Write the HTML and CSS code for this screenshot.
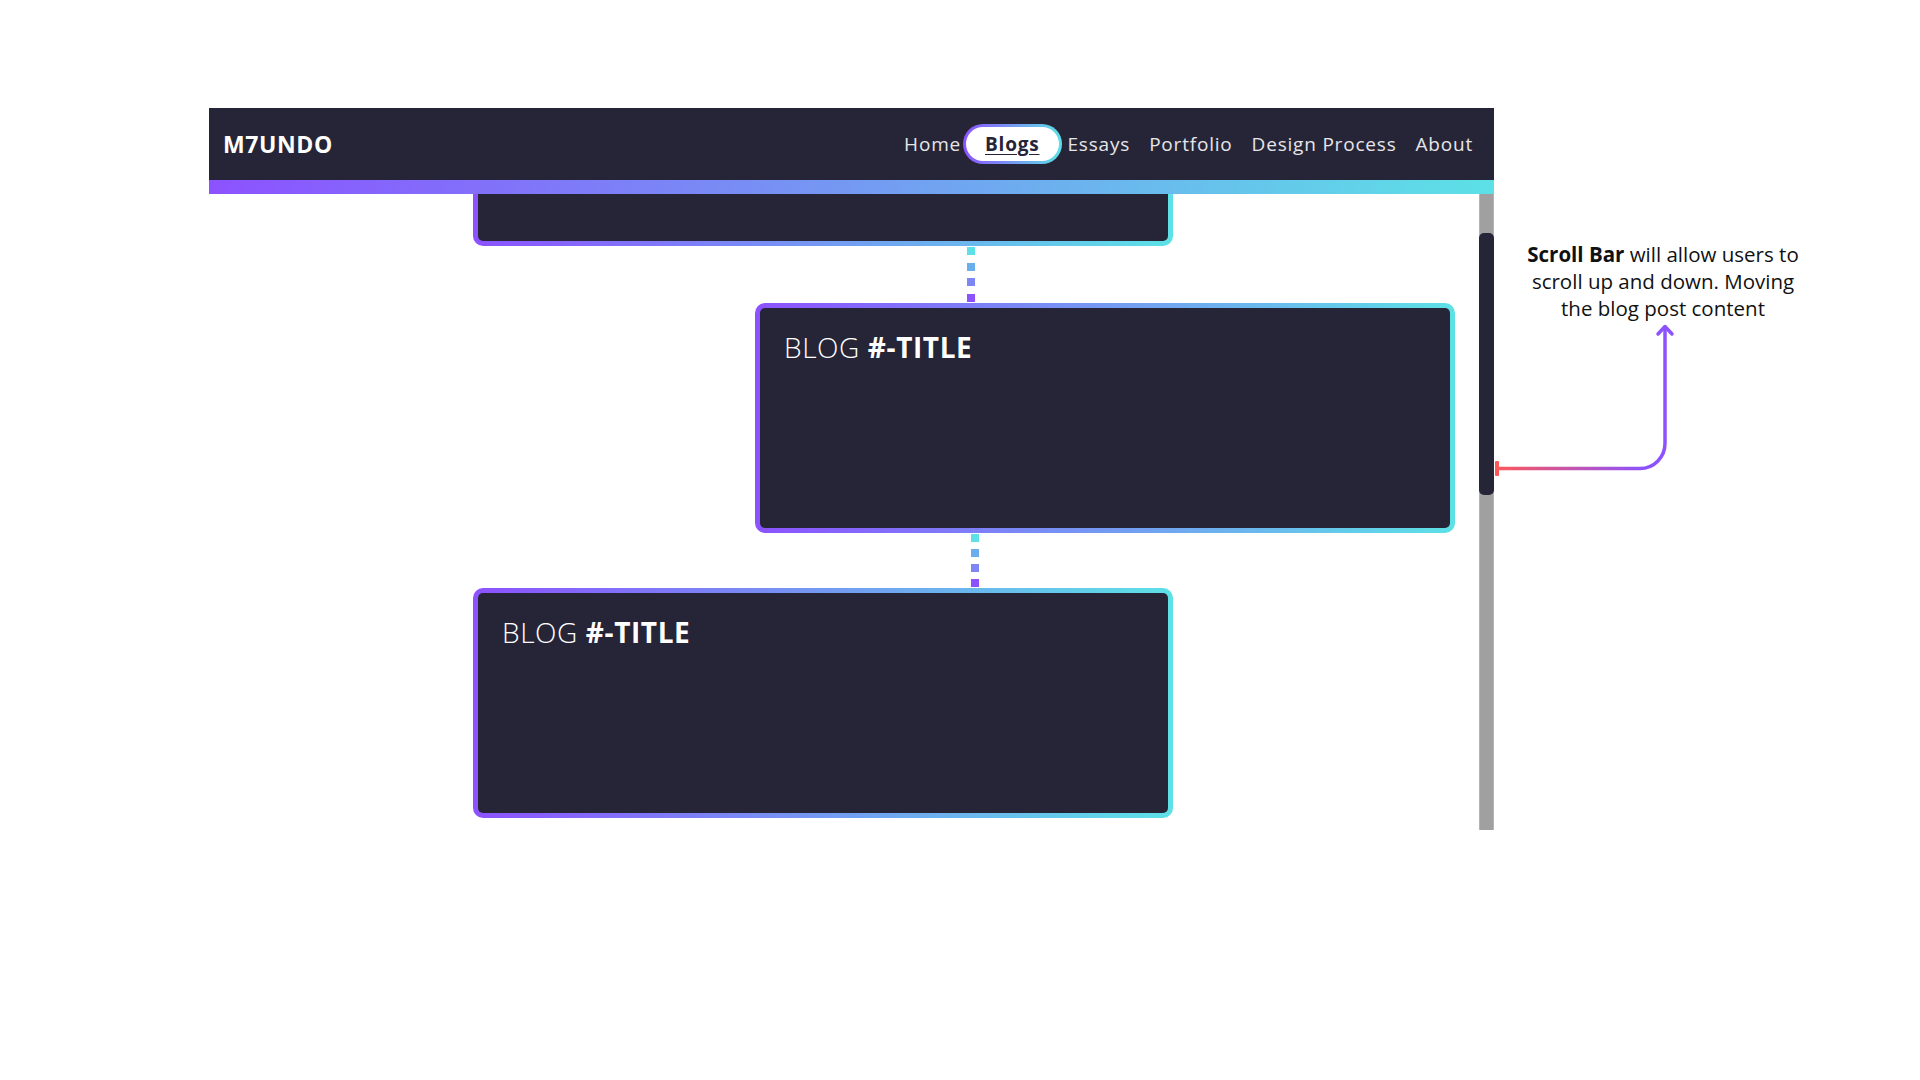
FILE: index.html
```html
<!DOCTYPE html>
<html lang="en">
	<head>
		<meta charset="UTF-8" />
		<title>M7UNDO - Blogs</title>
		<link rel="stylesheet" href="styles.css">
	</head>
	<body>
		<div class="frame">
			<header class="topbar">
				<div class="logo">M7UNDO</div>
				<nav class="nav">
					<a href="#">Home</a>
					<a href="#" class="current">Blogs</a>
					<a href="#">Essays</a>
					<a href="#">Portfolio</a>
					<a href="#">Design Process</a>
					<a href="#">About</a>
				</nav>
			</header>
			<div class="stripe"></div>
			<div class="view">
				<main class="timeline">
					<article class="card card-left card-first"></article>
					<div class="link link-a"><i></i><i></i><i></i><i></i></div>
					<article class="card card-right"><h2><span class="thin">BLOG</span> #-TITLE</h2></article>
					<div class="link link-b"><i></i><i></i><i></i><i></i></div>
					<article class="card card-left"><h2><span class="thin">BLOG</span> #-TITLE</h2></article>
				</main>
				<div class="track"><div class="thumb"></div></div>
			</div>
		</div>
		<aside class="note">
			<p><b>Scroll Bar</b> will allow users to scroll up and down. Moving the blog post content</p>
			<svg class="pointer" width="190" height="162" viewBox="0 0 190 162">
				<defs>
					<linearGradient id="arrowfade" gradientUnits="userSpaceOnUse" x1="0" y1="0" x2="150" y2="0">
						<stop offset="0" stop-color="#ff5757" />
						<stop offset="1" stop-color="#8c52ff" />
					</linearGradient>
				</defs>
				<rect x="1" y="139" width="4" height="15" rx="1" fill="#ff5757" />
				<path d="M3 146.5 H146 A25 25 0 0 0 171 121.5 V5" fill="none" stroke="url(#arrowfade)" stroke-width="3.5" stroke-linecap="round" />
				<path d="M164 12 L171 4.5 L178 12" fill="none" stroke="#8c52ff" stroke-width="3.5" stroke-linecap="round" stroke-linejoin="round" />
			</svg>
		</aside>
	</body>
</html>
```

FILE: styles.css
```css
body{
	margin:0;
	padding:108px 0 0 209px;
	background:#fff;
	display:flex;
	align-items:flex-start;
	font-family:"Open Sans",sans-serif;
}
.frame{
	width:1285px;
	flex:none;
}
/* top bar */
.topbar{
	height:72px;
	background:#262537;
	display:flex;
	align-items:center;
	justify-content:space-between;
	padding:0 21px 0 14px;
	box-sizing:border-box;
}
.logo{
	color:#fff;
	font-weight:700;
	font-size:23px;
	letter-spacing:0.6px;
}
.nav{
	display:flex;
	align-items:center;
	gap:19px;
}
.nav a{
	color:#e6e6ea;
	text-decoration:none;
	font-size:19px;
	letter-spacing:0.8px;
}
.nav a.current{
	margin:0 -13px 0 -17px;
	padding:0 19px;
	height:34px;
	line-height:34px;
	border:3px solid transparent;
	border-radius:20px;
	background:linear-gradient(#fff,#fff) padding-box,linear-gradient(90deg,#8c52ff,#5ce1e6) border-box;
	color:#262537;
	font-weight:700;
	text-decoration:underline;
	text-underline-offset:3px;
}
.stripe{
	height:14px;
	background:linear-gradient(90deg,#8c52ff,#5ce1e6);
	position:relative;
	z-index:1;
}
/* scroll area */
.view{
	height:636px;
	display:flex;
	overflow:hidden;
}
.timeline{
	flex:1;
	display:flex;
	flex-direction:column;
	align-items:flex-start;
}
.card{
	width:700px;
	height:230px;
	box-sizing:border-box;
	border:5px solid transparent;
	border-radius:10px;
	background:linear-gradient(#262537,#262537) padding-box,linear-gradient(90deg,#8c52ff,#5ce1e6) border-box;
	padding:21px 24px;
	flex:none;
}
.card-left{
	margin-left:264px;
}
.card-right{
	margin-left:546px;
}
.card-first{
	margin-top:-178px;
}
.card h2{
	margin:0;
	color:#fff;
	font-size:28px;
	font-weight:700;
	line-height:36px;
	letter-spacing:0.6px;
}
.card .thin{
	font-weight:300;
}
.link{
	height:57px;
	display:flex;
	flex-direction:column;
	justify-content:space-between;
	padding:1px 0;
	box-sizing:border-box;
}
.link-a{
	margin-left:758px;
}
.link-b{
	height:55px;
	margin-left:762px;
}
.link i{
	width:8px;
	height:8px;
	display:block;
}
.link i:nth-child(1){background:#5ce1e6;}
.link i:nth-child(2){background:#6aaeec;}
.link i:nth-child(3){background:#7e86f5;}
.link i:nth-child(4){background:#8c52ff;}
.track{
	width:15px;
	flex:none;
	background:#a0a0a0;
	box-shadow:inset 1px 0 #b4b4b4,inset -1px 0 #b4b4b4;
	padding-top:39px;
	box-sizing:border-box;
}
.thumb{
	height:262px;
	background:#262537;
	border-radius:5px;
}
/* annotation */
.note{
	width:290px;
	margin-top:133px;
	margin-left:24px;
	flex:none;
}
.note p{
	margin:0;
	text-align:center;
	font-size:20.5px;
	line-height:27px;
	color:#111;
}
.pointer{
	display:block;
	margin-left:-24px;
}
```
